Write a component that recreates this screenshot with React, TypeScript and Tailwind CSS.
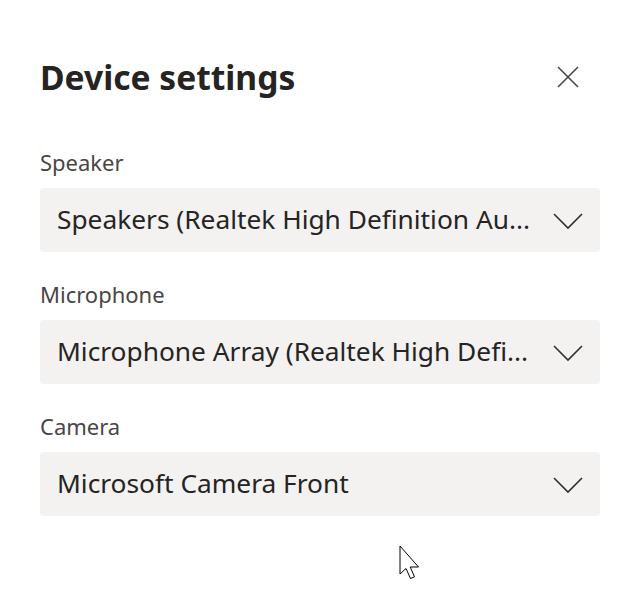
import React from "react";

function Chevron() {
  return (
    <svg width="30" height="18" viewBox="0 0 30 18" fill="none">
      <path d="M1 2 L15 16 L29 2" stroke="#323130" strokeWidth="1.6" />
    </svg>
  );
}

function Field({ label, value }: { label: string; value: string }) {
  return (
    <div className="flex flex-col">
      <div className="text-[22px] leading-[28px] text-[#484644] h-[28px]">{label}</div>
      <div className="mt-[12px] h-[64px] rounded-[4px] bg-[#f3f2f1] flex items-center pl-[17px] pr-[17px]">
        <div className="flex-1 whitespace-nowrap overflow-hidden text-[26.3px] text-[#252423]">{value}</div>
        <div className="ml-[10px] mt-[1px]">
          <Chevron />
        </div>
      </div>
    </div>
  );
}

export default function App() {
  return (
    <div
      className="relative w-[640px] h-[604px] bg-white overflow-hidden"
      style={{ fontFamily: '"Noto Sans", "Open Sans", sans-serif' }}
    >
      <div className="px-[40px] pt-[55px]">
        <div className="flex items-center justify-between">
          <h1 className="text-[33.6px] font-bold text-[#252423] leading-[44px]">Device settings</h1>
          <svg width="22" height="22" viewBox="0 0 22 22" className="mr-[21px]">
            <path d="M1 1 L21 21 M21 1 L1 21" stroke="#484644" strokeWidth="1.6" />
          </svg>
        </div>
        <div className="mt-[49px] flex flex-col gap-[28px]">
          <Field label="Speaker" value="Speakers (Realtek High Definition Au..." />
          <Field label="Microphone" value="Microphone Array (Realtek High Defi..." />
          <Field label="Camera" value="Microsoft Camera Front" />
        </div>
      </div>
      <svg
        className="absolute left-[399px] top-[545px]"
        width="26"
        height="40"
        viewBox="0 0 26 40"
      >
        <path
          d="M1 1 L1 29 L7 23.5 L11.5 33.5 L15.5 31.8 L11.2 22 L19.5 22 Z"
          fill="#fff"
          stroke="#000"
          strokeWidth="1"
          strokeLinejoin="miter"
        />
      </svg>
    </div>
  );
}
